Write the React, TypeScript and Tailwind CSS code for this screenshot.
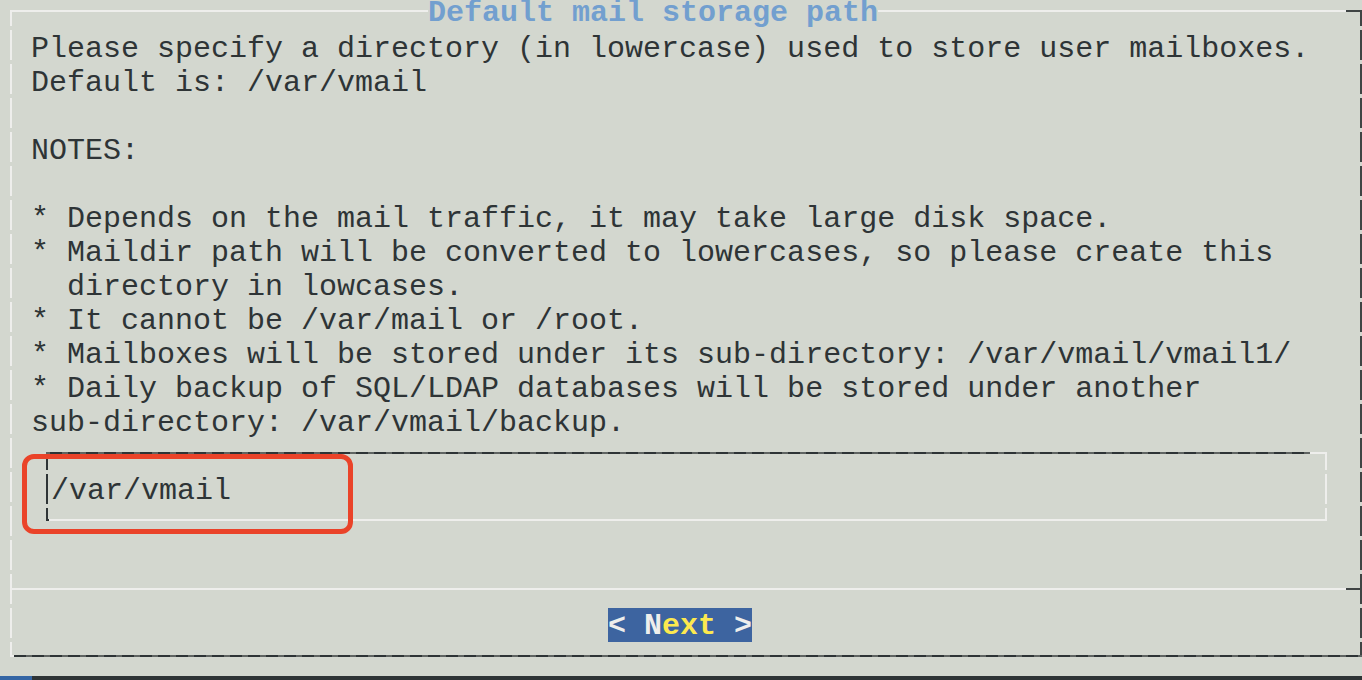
import React from "react";

const lines = [
  "Please specify a directory (in lowercase) used to store user mailboxes.",
  "Default is: /var/vmail",
  "",
  "NOTES:",
  "",
  "* Depends on the mail traffic, it may take large disk space.",
  "* Maildir path will be converted to lowercases, so please create this",
  "  directory in lowcases.",
  "* It cannot be /var/mail or /root.",
  "* Mailboxes will be stored under its sub-directory: /var/vmail/vmail1/",
  "* Daily backup of SQL/LDAP databases will be stored under another",
  "sub-directory: /var/vmail/backup.",
];

export default function App() {
  return (
    <div
      className="relative w-[1362px] h-[680px] overflow-hidden bg-[#d3d7cf] text-[#2e3436] flex flex-col"
      style={{ fontFamily: '"Liberation Mono", "DejaVu Sans Mono", monospace' }}
    >
      {/* dialog */}
      <div className="mt-[10px] ml-[10px] w-[1352px] flex flex-col">
        {/* top border with title */}
        <div className="h-[2px] flex items-center">
          <div className="w-[418px] h-[2px] bg-[#eeeeec]" />
          <div className="w-[450px] shrink-0 text-[30px] leading-[30px] font-bold text-[#729fcf] whitespace-pre mt-[4px]">
            Default mail storage path
          </div>
          <div className="flex-1 h-[2px] bg-[#eeeeec]" />
          <div className="w-[16px] h-[2px] bg-[#3f4444]" />
        </div>
        {/* middle */}
        <div className="flex">
          <div className="w-[2px] bg-[repeating-linear-gradient(to_bottom,#eeeeec_0_14px,transparent_14px_18px,#eeeeec_18px_34px)]" />
          <div className="flex-1 flex flex-col h-[643px]">
            <div className="pl-[19px] pt-[20px] text-[30px] leading-[34px] whitespace-pre">
              {lines.map((l, i) => (
                <div key={i} className="h-[34px]">
                  {l}
                </div>
              ))}
            </div>
            {/* input box */}
            <div className="ml-[34px] mt-[12px] w-[1281px] flex flex-col">
              <div className="flex h-[2px]">
                <div className="flex-1 bg-[repeating-linear-gradient(to_right,#5f6462_0_4px,#2e3436_4px_16px,#5f6462_16px_18px)]" />
                <div className="w-[17px] bg-[#eeeeec]" />
              </div>
              <div className="flex h-[65px]">
                <div className="w-[2px] bg-[repeating-linear-gradient(to_bottom,#2e3436_0_16px,transparent_16px_20px,#2e3436_20px_34px)]" />
                <div className="flex-1 pt-[20px] pl-[3px] text-[30px] leading-[34px] whitespace-pre">
                  /var/vmail
                </div>
                <div className="w-[2px] bg-[repeating-linear-gradient(to_bottom,#eeeeec_0_16px,transparent_16px_20px,#eeeeec_20px_34px)]" />
              </div>
              <div className="flex h-[2px]">
                <div className="w-[3px] bg-[#2e3436]" />
                <div className="flex-1 bg-[#eeeeec]" />
              </div>
            </div>
            {/* separator */}
            <div className="mt-[67px] h-[2px] flex">
              <div className="flex-1 bg-[#eeeeec]" />
              <div className="w-[14px] bg-[#3f4444]" />
            </div>
            {/* button */}
            <div className="mt-[18px] ml-[596px] w-[144px] h-[34px] bg-[#3d64a0] text-[30px] leading-[36px] font-bold whitespace-pre text-[#eeeeec]">
              {"< "}N<span className="text-[#fce94f]">ext</span>{" >"}
            </div>
          </div>
          <div className="w-[2px] bg-[repeating-linear-gradient(to_bottom,#3f4444_0_14px,transparent_14px_18px,#3f4444_18px_34px)]" />
        </div>
        {/* bottom border */}
        <div className="h-[2px] flex">
          <div className="w-[4px] bg-[#eeeeec]" />
          <div className="flex-1 bg-[repeating-linear-gradient(to_right,#2e3436_0_12px,#5f6462_12px_18px)]" />
        </div>
      </div>
      {/* bottom status strip */}
      <div className="mt-[19px] h-[4px] flex">
        <div className="w-[32px] bg-[#3465a4]" />
        <div className="flex-1 bg-[#2e3436]" />
      </div>

      {/* red annotation */}
      <div className="absolute left-[22px] top-[454px] w-[331px] h-[80px] rounded-[12px] border-[5px] border-[#ea4329]" />
    </div>
  );
}
